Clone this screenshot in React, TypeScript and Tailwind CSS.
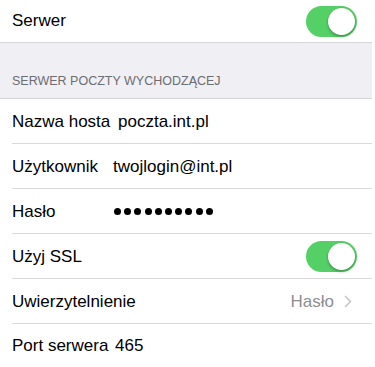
import React from "react";

const font = { fontFamily: '"Liberation Sans", Arial, sans-serif' };

function Toggle() {
  return (
    <div className="relative w-[51px] h-[31px] rounded-full bg-[#55d066] shrink-0">
      <div className="absolute right-[2px] top-[2px] w-[27px] h-[27px] rounded-full bg-white shadow-[0_2px_3px_rgba(0,0,0,0.25),0_0_0_0.5px_rgba(0,0,0,0.08)]" />
    </div>
  );
}

function Row({
  children,
  sep = true,
  h = "h-[45px]",
}: {
  children: React.ReactNode;
  sep?: boolean;
  h?: string;
}) {
  return (
    <div className={`relative flex items-center pl-[12px] ${h}`}>
      {children}
      {sep && <div className="absolute left-[12px] right-0 bottom-0 h-px bg-[#d9d9dd]" />}
    </div>
  );
}

export default function App() {
  return (
    <div className="w-[375px] h-[367px] bg-white overflow-hidden" style={font}>
      <div className="w-[372px] text-[17px] text-black">
        <div className="flex items-center justify-between pl-[12px] pr-[15px] h-[42px]">
          <span>Serwer</span>
          <Toggle />
        </div>
        <div className="h-[57px] bg-[#efeff4] border-y border-[#d6d6da] flex items-end pl-[12px] pb-[7px]">
          <span className="text-[12.5px] text-[#6d6d72]">SERWER POCZTY WYCHODZĄCEJ</span>
        </div>
        <Row>
          <span className="w-[106px] shrink-0">Nazwa hosta</span>
          <span>poczta.int.pl</span>
        </Row>
        <Row>
          <span className="w-[101px] shrink-0">Użytkownik</span>
          <span>twojlogin@int.pl</span>
        </Row>
        <Row>
          <span className="w-[102px] shrink-0">Hasło</span>
          <div className="flex gap-[3.2px] items-center">
            {Array.from({ length: 10 }).map((_, i) => (
              <div key={i} className="w-[7px] h-[7px] rounded-full bg-black" />
            ))}
          </div>
        </Row>
        <Row>
          <div className="flex flex-1 items-center justify-between pr-[15px]">
            <span>Użyj SSL</span>
            <Toggle />
          </div>
        </Row>
        <Row>
          <div className="flex flex-1 items-center justify-between pr-[20px]">
            <span>Uwierzytelnienie</span>
            <div className="flex items-center gap-[10px]">
              <span className="text-[#8e8e93]">Hasło</span>
              <svg width="8" height="13" viewBox="0 0 8 13" fill="none">
                <path d="M1 1l5.5 5.5L1 12" stroke="#c7c7cc" strokeWidth="1.6" />
              </svg>
            </div>
          </div>
        </Row>
        <Row sep={false} h="h-[44px]">
          <span className="w-[103px] shrink-0">Port serwera</span>
          <span>465</span>
        </Row>
      </div>
    </div>
  );
}
